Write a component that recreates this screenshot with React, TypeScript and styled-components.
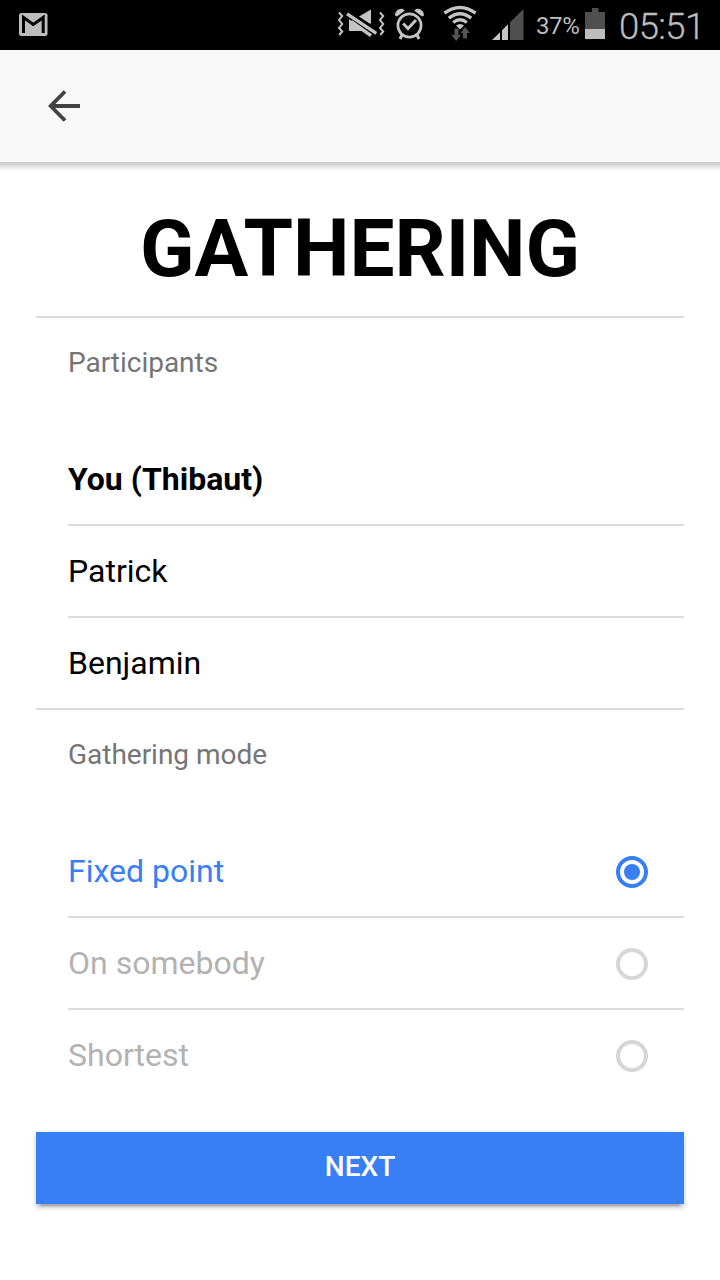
import React, { useState } from 'react';
import styled, { createGlobalStyle } from 'styled-components';

const GlobalStyle = createGlobalStyle`
  * { box-sizing: border-box; }
  body {
    margin: 0;
    background: #fff;
    font-family: Roboto, "Noto Sans", sans-serif;
    color: #000;
  }
`;

const Screen = styled.div`
  width: 720px;
  height: 1280px;
  display: flex;
  flex-direction: column;
  background: #fff;
  overflow: hidden;
`;

const StatusBar = styled.header`
  height: 50px;
  flex: none;
  display: flex;
  align-items: flex-start;
  background: #000;
  color: #bdbdbd;
`;

const StatusIcon = styled.svg<{ $left?: number }>`
  display: block;
  flex: none;
  margin-left: ${({ $left = 0 }) => $left}px;
`;

const Spacer = styled.div`
  flex: 1;
`;

const BatteryText = styled.span`
  width: 46px;
  margin-left: 11px;
  font-size: 24px;
  line-height: 52px;
  letter-spacing: -0.4px;
  white-space: nowrap;
`;

const Clock = styled.span`
  width: 86px;
  margin: 0 15px 0 14px;
  font-size: 36.5px;
  font-weight: 300;
  line-height: 53px;
  letter-spacing: -0.6px;
  white-space: nowrap;
  -webkit-text-stroke: 0.3px #bdbdbd;
`;

const Toolbar = styled.nav`
  height: 112px;
  flex: none;
  display: flex;
  align-items: center;
  padding-left: 44px;
  background: #f8f8f8;
`;

const ToolbarShadow = styled.div`
  height: 10px;
  flex: none;
  background: linear-gradient(#cecece 0, #d2d2d2 25%, #e6e6e6 48%, #f5f5f5 70%, #fff 100%);
`;

const BackButton = styled.button`
  display: flex;
  padding: 0;
  border: 0;
  background: none;
`;

const Content = styled.main`
  display: flex;
  flex-direction: column;
  padding: 10px 36px 0;
`;

const Title = styled.h1`
  height: 134px;
  margin: 0;
  font-size: 80px;
  font-weight: 700;
  line-height: 135px;
  text-align: center;
`;

const Group = styled.section`
  border-top: 2px solid #dcdcdc;
  padding-left: 32px;
`;

const GroupTitle = styled.h2`
  margin: 0 0 26px;
  font-size: 28px;
  font-weight: 400;
  line-height: 90px;
  letter-spacing: -0.02px;
  color: #757575;
`;

const Row = styled.div<{ $tone?: 'strong' | 'active' | 'muted' }>`
  height: 90px;
  display: flex;
  align-items: center;
  justify-content: space-between;
  padding-right: 36px;
  font-size: 32px;
  font-weight: ${({ $tone }) => ($tone === 'strong' ? 700 : 400)};
  color: ${({ $tone }) =>
    $tone === 'active' ? '#387ef5' : $tone === 'muted' ? '#b2b2b2' : '#000'};

  & + & {
    height: 92px;
    border-top: 2px solid #dcdcdc;
  }
`;

const Radio = styled.span<{ $checked: boolean }>`
  width: 32px;
  height: 32px;
  margin-top: 2px;
  display: flex;
  align-items: center;
  justify-content: center;
  border: 4px solid ${({ $checked }) => ($checked ? '#387ef5' : '#d6d6d6')};
  border-radius: 50%;

  &::after {
    content: '';
    width: 16px;
    height: 16px;
    border-radius: 50%;
    background: ${({ $checked }) => ($checked ? '#387ef5' : 'transparent')};
  }
`;

const NextButton = styled.button`
  height: 72px;
  margin-top: 32px;
  padding: 0 0 4px;
  border: 0;
  background: #387ef5;
  box-shadow: 0 4px 4px rgba(0, 0, 0, 0.14), 0 6px 2px -4px rgba(0, 0, 0, 0.2),
    0 2px 6px rgba(0, 0, 0, 0.12);
  color: #fff;
  font-family: inherit;
  font-size: 28px;
  font-weight: 500;
`;

const MailIcon = () => (
  <StatusIcon $left={19} width="29" height="50" viewBox="0 0 29 50">
    <rect x="0" y="13" width="28.5" height="23" rx="2.5" fill="#bdbdbd" />
    <path d="M4.5 33V17.5L14.3 24.5L24.2 17.5V33" fill="none" stroke="#000" strokeWidth="3" />
  </StatusIcon>
);

const VibrateIcon = () => (
  <StatusIcon width="48" height="50" viewBox="0 0 48 50">
    <g fill="none" stroke="#c4c4c4" strokeWidth="2">
      <path d="M2 12.5L5.2 16L2 20L5.2 24L2 28L5.2 31.5L2.2 35" />
      <path d="M43 12.5L46.2 16L43 20L46.2 24L43 28L46.2 31.5L43.2 35" />
    </g>
    <path d="M22 16.5L34 9.5V23.5L32.5 23.5ZM12 19L28 31H12Z" fill="#c4c4c4" />
    <path d="M10 13.8L39.3 33.3M14 21.5L34 35.6" stroke="#c4c4c4" strokeWidth="3.4" />
  </StatusIcon>
);

const AlarmIcon = () => (
  <StatusIcon $left={9} width="32" height="50" viewBox="0 0 32 50">
    <g fill="none" stroke="#c4c4c4">
      <circle cx="15.5" cy="25.5" r="11.6" strokeWidth="2.7" />
      <path d="M9.2 23.5L14 28.5L22 20" strokeWidth="3" />
      <path d="M8 35L6 39M23 35L25 39" strokeWidth="3" />
    </g>
    <path d="M1 15.5C1 11 5 8 9 9L10.7 10.7L3 16.5ZM30 15.5C30 11 26 8 22 9L20.3 10.7L28 16.5Z" fill="#c4c4c4" />
  </StatusIcon>
);

const WifiIcon = () => (
  <StatusIcon $left={17} width="34" height="50" viewBox="0 0 34 50">
    <g fill="none" stroke="#c4c4c4" strokeWidth="3.4">
      <path d="M1.4 13.2Q17 1.6 32.6 13.2" />
      <path d="M5.8 18.1Q17 9.3 28.2 18.1" />
      <path d="M10.2 22.5Q17 17.2 23.8 22.5" />
    </g>
    <path d="M13 25.5Q17 22.5 21 25.5L17 29.5Z" fill="#c4c4c4" />
    <path d="M11.5 28.5H15.5V35H18L13.2 41L8.5 35H11.5ZM20 38.5H24V33H27L22 27L17.5 33H20Z" fill="#555" />
  </StatusIcon>
);

const SignalIcon = () => (
  <StatusIcon $left={15} width="33" height="50" viewBox="0 0 33 50">
    <path d="M0 40L8 32.2V40ZM10 40V30.2L16 24.3V40Z" fill="#c4c4c4" />
    <path d="M18 40V22.3L31.5 9V40Z" fill="#4f4f4f" />
  </StatusIcon>
);

const BatteryIcon = () => (
  <StatusIcon $left={3} width="20" height="50" viewBox="0 0 20 50">
    <path d="M0 12H7V8H13.5V12H20V29H0Z" fill="#4f4f4f" />
    <path d="M0 29H20V39H0Z" fill="#bdbdbd" />
  </StatusIcon>
);

const ArrowIcon = () => (
  <svg width="40" height="40" viewBox="0 0 40 40">
    <path d="M36 20H7" stroke="#424242" strokeWidth="4" />
    <path d="M21 5.5L6.7 20L21 34.5" fill="none" stroke="#424242" strokeWidth="3.8" />
  </svg>
);

const participants = ['You (Thibaut)', 'Patrick', 'Benjamin'];
const modes = ['Fixed point', 'On somebody', 'Shortest'];

export default function App() {
  const [mode, setMode] = useState(modes[0]);

  return (
    <Screen>
      <GlobalStyle />
      <StatusBar>
        <MailIcon />
        <Spacer />
        <VibrateIcon />
        <AlarmIcon />
        <WifiIcon />
        <SignalIcon />
        <BatteryText>37%</BatteryText>
        <BatteryIcon />
        <Clock>05:51</Clock>
      </StatusBar>
      <Toolbar>
        <BackButton aria-label="Back">
          <ArrowIcon />
        </BackButton>
      </Toolbar>
      <ToolbarShadow />
      <Content>
        <Title>GATHERING</Title>
        <Group>
          <GroupTitle>Participants</GroupTitle>
          {participants.map((name, i) => (
            <Row key={name} $tone={i === 0 ? 'strong' : undefined}>
              {name}
            </Row>
          ))}
        </Group>
        <Group>
          <GroupTitle>Gathering mode</GroupTitle>
          {modes.map((name) => (
            <Row
              key={name}
              role="radio"
              aria-checked={name === mode}
              $tone={name === mode ? 'active' : 'muted'}
              onClick={() => setMode(name)}
            >
              {name}
              <Radio $checked={name === mode} />
            </Row>
          ))}
        </Group>
        <NextButton>NEXT</NextButton>
      </Content>
    </Screen>
  );
}
